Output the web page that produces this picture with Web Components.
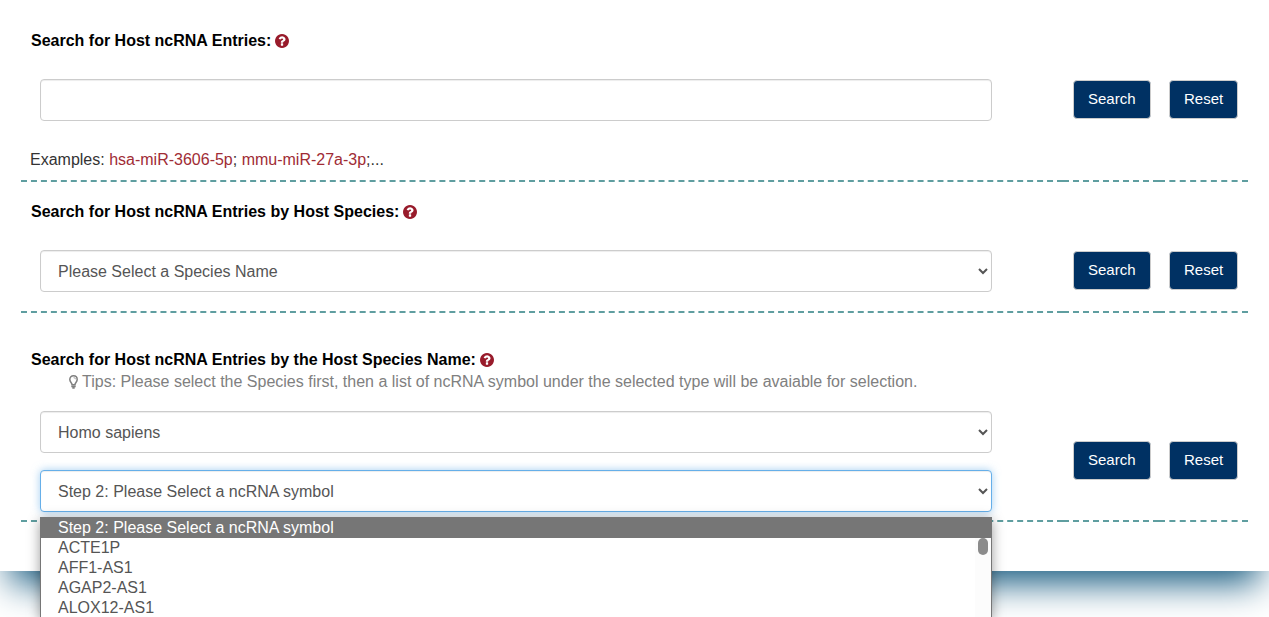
<!DOCTYPE html>
<html lang="en">
<head>
<meta charset="utf-8">
<title>Host ncRNA search</title>
<style>
  body {
    margin: 0;
    min-height: 100vh;
    background: white;
    font: 16px/22px "Liberation Sans", Arial, sans-serif;
    color: #333;
    overflow: hidden;
  }
</style>
</head>
<body>
<search-panel>
  <search-row style="--row-top: 30px; --row-bottom: 0px">
    <label slot="heading" for="ncrna">Search for Host ncRNA Entries:</label>
    <field-box><input id="ncrna" type="text"></field-box>
    <example-list slot="footer"></example-list>
  </search-row>

  <search-row style="--row-top: 19px; --row-bottom: 19px">
    <label slot="heading" for="species">Search for Host ncRNA Entries by Host Species:</label>
    <field-box>
      <select id="species"><option>Please Select a Species Name</option></select>
    </field-box>
  </search-row>

  <search-row style="--row-top: 36px; --row-bottom: 8px; --head-gap: 18px">
    <label slot="heading" for="host">Search for Host ncRNA Entries by the Host Species Name:</label>
    <tip-line slot="tip">Tips: Please select the Species first, then a list of ncRNA symbol under the selected type will be avaiable for selection.</tip-line>
    <field-box>
      <select id="host"><option>Homo sapiens</option></select>
    </field-box>
    <field-box open>
      <select id="symbol" aria-label="ncRNA symbol"><option>Step 2: Please Select a ncRNA symbol</option></select>
      <option-list slot="popup" items="Step 2: Please Select a ncRNA symbol|ACTE1P|AFF1-AS1|AGAP2-AS1|ALOX12-AS1"></option-list>
    </field-box>
  </search-row>
</search-panel>

<script>
class SearchPanel extends HTMLElement {
  constructor() {
    super();
    this.attachShadow({ mode: "open" });
    this.shadowRoot.innerHTML = `
      <style>
        :host {
          display: block;
          padding: 0 21px 49px 21px;
          background: white;
          box-shadow: 0 22px 34px -10px #14597f;
        }
      </style>
      <slot></slot>
    `;
  }
}

class HelpIcon extends HTMLElement {
  constructor() {
    super();
    this.attachShadow({ mode: "open" });
    this.shadowRoot.innerHTML = `
      <style>
        :host { display: inline-flex; color: #981b2b; }
        svg { width: 14px; height: 14px; fill: currentColor; }
      </style>
      <svg viewBox="128 128 1536 1536" aria-hidden="true"><path d="M1024 1376v-192q0-14-9-23t-23-9h-192q-14 0-23 9t-9 23v192q0 14 9 23t23 9h192q14 0 23-9t9-23zm256-672q0-88-55.5-163t-138.5-116-170-41q-243 0-371 213-15 24 8 42l132 100q7 6 19 6 16 0 25-12 53-68 86-92 34-24 86-24 48 0 85.5 26t37.5 59q0 38-20 61t-68 45q-63 28-115.5 86.5t-52.5 125.5v36q0 14 9 23t23 9h192q14 0 23-9t9-23q0-19 21.5-49.5t54.5-49.5q32-18 49-28.5t46-35 44.5-48 28-60.5 12.5-81zm384 192q0 209-103 385.5t-279.5 279.5-385.5 103-385.5-103-279.5-279.5-103-385.5 103-385.5 279.5-279.5 385.5-103 385.5 103 279.5 279.5 103 385.5z"/></svg>
    `;
  }
}

class ActionButton extends HTMLElement {
  constructor() {
    super();
    this.attachShadow({ mode: "open" });
    this.shadowRoot.innerHTML = `
      <style>
        :host { display: block; }
        button {
          display: block;
          padding: 7px 14px 9px;
          border: 1px solid #ccc;
          border-radius: 4px;
          background: #003163;
          color: white;
          font: inherit;
          font-size: 15px;
          line-height: 21px;
          cursor: pointer;
        }
        button:hover { background: #00427f; }
      </style>
      <button type="button"><slot></slot></button>
    `;
  }
}

// One search form: heading, fields with their buttons, and a dashed rule per column
class SearchRow extends HTMLElement {
  constructor() {
    super();
    this.attachShadow({ mode: "open" });
    this.shadowRoot.innerHTML = `
      <style>
        :host {
          display: grid;
          grid-template-columns: 1fr 96px 89px;
          padding-top: var(--row-top);
        }
        .head {
          grid-column: 1 / -1;
          padding: 0 10px;
          margin-bottom: var(--head-gap, 27px);
        }
        .title { display: flex; align-items: center; gap: 4px; }
        ::slotted(label) { color: black; font-weight: bold; }
        .fields {
          display: grid;
          gap: 17px;
          padding: 0 71px 0 19px;
        }
        action-button { align-self: center; padding: 0 0 2px 10px; }
        .foot { grid-column: 1 / -1; padding: 0 9px var(--row-bottom); }
        .rule { border-bottom: 2px dashed #5f9ea0; }
      </style>
      <div class="head">
        <div class="title"><slot name="heading"></slot><help-icon></help-icon></div>
        <slot name="tip"></slot>
      </div>
      <div class="fields"><slot></slot></div>
      <action-button>Search</action-button>
      <action-button>Reset</action-button>
      <div class="foot"><slot name="footer"></slot></div>
      <div class="rule"></div>
      <div class="rule"></div>
      <div class="rule"></div>
    `;
  }
}

class FieldBox extends HTMLElement {
  constructor() {
    super();
    this.attachShadow({ mode: "open" });
    this.shadowRoot.innerHTML = `
      <style>
        :host { display: block; position: relative; }
        ::slotted(input), ::slotted(select) {
          display: block;
          box-sizing: border-box;
          width: 100%;
          height: 42px;
          margin: 0;
          padding: 0 13px;
          border: 1px solid #ccc;
          border-radius: 4px;
          outline: 0;
          background: white;
          box-shadow: inset 0 1px 1px rgba(0, 0, 0, .075);
          color: #555;
          font: inherit;
        }
        :host([open]) ::slotted(select),
        ::slotted(select:focus),
        ::slotted(input:focus) {
          border-color: #66afe9;
          box-shadow: inset 0 1px 1px rgba(0, 0, 0, .075), 0 0 8px rgba(102, 175, 233, .6);
        }
      </style>
      <slot></slot>
      <slot name="popup"></slot>
    `;
  }
}

class OptionList extends HTMLElement {
  constructor() {
    super();
    this.attachShadow({ mode: "open" });
  }

  connectedCallback() {
    this.items = this.getAttribute("items").split("|");
    this.render();
  }

  render() {
    this.shadowRoot.innerHTML = `
      <style>
        :host {
          display: block;
          position: absolute;
          z-index: 1;
          top: calc(100% + 5px);
          left: 0;
          right: 0;
          border: 1px solid #767676;
          border-bottom: 0;
          background: white;
          box-shadow: 0 3px 12px rgba(0, 0, 0, .4);
          color: #555;
          line-height: 20px;
        }
        ul { margin: 0; padding: 0; list-style: none; }
        li { padding: 0 17px; }
        li[aria-selected="true"] { background: #767676; color: white; }
        .track {
          position: absolute;
          top: 20px;
          right: 0;
          bottom: 0;
          width: 16px;
          background: #fcfcfc;
        }
        .thumb {
          width: 10px;
          height: 17px;
          margin: 0 3px;
          border-radius: 5px;
          background: #8b8b8b;
        }
      </style>
      <ul role="listbox">
        ${this.items.map((item, i) => `<li role="option" aria-selected="${i === 0}">${item}</li>`).join("")}
      </ul>
      <div class="track"><div class="thumb"></div></div>
    `;
  }
}

class TipLine extends HTMLElement {
  constructor() {
    super();
    this.attachShadow({ mode: "open" });
    this.shadowRoot.innerHTML = `
      <style>
        :host {
          display: flex;
          align-items: center;
          gap: 4px;
          padding-left: 38px;
          color: gray;
        }
        svg { flex: none; width: 9px; height: 14px; }
      </style>
      <svg viewBox="0 0 9 14" fill="none" stroke="currentColor" aria-hidden="true">
        <path d="M3 9.500C3 7.600.8 7.100.8 4.600.8 2.300 2.400.8 4.500.8s3.700 1.500 3.700 3.800C8.200 7.100 6 7.600 6 9.500" stroke-width="1.500"/>
        <path d="M4.600 2.700C5.800 2.700 6.400 3.300 6.400 4.200" stroke-width=".8"/>
        <path d="M2.300 9.800h4.400M2.300 11.400h4.400M3.300 12.900h2.400" stroke-width="1.500"/>
      </svg>
      <span><slot></slot></span>
    `;
  }
}

class ExampleList extends HTMLElement {
  constructor() {
    super();
    this.attachShadow({ mode: "open" });
    this.shadowRoot.innerHTML = `
      <style>
        :host { display: block; padding: 28px 0 9px; }
        a { color: #a02c35; text-decoration: none; }
        a:hover { text-decoration: underline; }
      </style>
      Examples: <a href="#hsa-miR-3606-5p">hsa-miR-3606-5p</a>; <a href="#mmu-miR-27a-3p">mmu-miR-27a-3p</a>;...
    `;
  }
}

customElements.define("search-panel", SearchPanel);
customElements.define("help-icon", HelpIcon);
customElements.define("action-button", ActionButton);
customElements.define("search-row", SearchRow);
customElements.define("field-box", FieldBox);
customElements.define("option-list", OptionList);
customElements.define("tip-line", TipLine);
customElements.define("example-list", ExampleList);
</script>
</body>
</html>
